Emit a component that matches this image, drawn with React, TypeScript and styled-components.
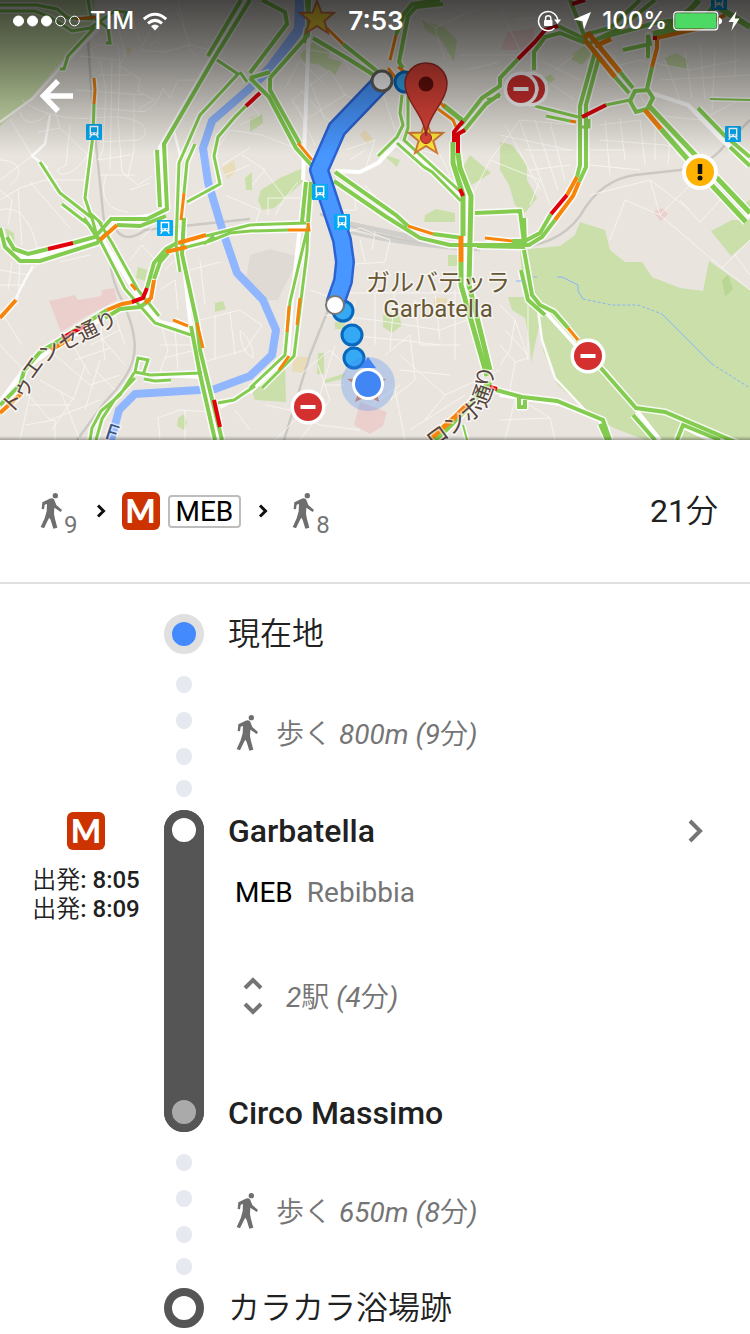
import React from "react";
import styled, { createGlobalStyle } from "styled-components";

const Global = createGlobalStyle`
  *, *::before, *::after { box-sizing: border-box; }
  body { margin: 0; background: #fff; }
  button { border: 0; padding: 0; background: none; color: inherit; font: inherit; cursor: pointer; }
  a { color: inherit; text-decoration: none; }
`;

const Page = styled.main`
  font-family: Roboto, "Noto Sans CJK JP", sans-serif;
  color: #212121;
  background: #fff;
`;

/* ---------- map header ---------- */

const MapHeader = styled.header`
  position: relative;
  min-height: 440px;
  overflow: hidden;
  color: #fff;
`;

const MapCanvas = styled.svg`
  position: absolute;
  inset: 0;
  width: 100%;
  height: 100%;
`;

const HeaderContent = styled.div`
  position: relative;
`;

const StatusBar = styled.div`
  display: grid;
  grid-template-columns: 1fr auto 1fr;
  align-items: center;
  height: 42px;
  padding: 0 10px 0 12px;
  font-family: Inter, sans-serif;
  font-size: 24px;
  font-weight: 500;
  line-height: 42px;
`;

const StatusGroup = styled.div<{ $end?: boolean }>`
  display: flex;
  align-items: center;
  justify-content: ${(p) => (p.$end ? "flex-end" : "flex-start")};
  gap: ${(p) => (p.$end ? "6px" : "8px")};
`;

const StatusIcons = styled.span`
  display: flex;
  align-items: center;
  gap: 12px;
  padding-right: 4px;
`;

const Clock = styled.time`
  font-size: 26px;
  font-weight: 600;
`;

const BackButton = styled.button`
  display: flex;
  margin: 34px 0 0 36px;
`;

/* ---------- route summary ---------- */

const Summary = styled.section`
  display: flex;
  align-items: center;
  justify-content: space-between;
  height: 144px;
  padding: 0 32px;
  border-bottom: 2px solid #e0e0e0;
`;

const Steps = styled.div`
  display: flex;
  align-items: center;
`;

const WalkStep = styled.span`
  display: flex;
  align-items: flex-start;
  height: 38px;
  gap: 1px;
  padding: 0 2px 0 8px;
`;

const WalkMinutes = styled.span`
  padding-top: 21px;
  font-size: 24px;
  line-height: 24px;
  color: #757575;
`;

const StepArrow = styled.svg`
  width: 10px;
  height: 16px;
  margin: 0 16px;
`;

const MetroLogo = styled.span`
  display: flex;
  align-items: center;
  justify-content: center;
  width: 38px;
  height: 38px;
  border-radius: 6px;
  background: #cc3300;
  color: #fff;
  font-family: Lato, sans-serif;
  font-size: 32px;
  font-weight: 900;
  line-height: 36px;
`;

const LineBadge = styled.span`
  margin: 0 1px 0 8px;
  padding: 0 6px;
  border: 2px solid #bdbdbd;
  border-radius: 4px;
  color: #000;
  font-size: 28px;
  line-height: 29px;
`;

const Duration = styled.span`
  font-size: 32px;
  line-height: 40px;
`;

const Light = styled.span`
  font-family: "Noto Sans CJK JP", sans-serif;
  font-style: normal;
  font-weight: 350;
  line-height: 1;
`;

/* ---------- itinerary ---------- */

const Itinerary = styled.ol`
  margin: 0;
  padding: 30px 0 6px;
  list-style: none;
`;

const Row = styled.li<{ $height: number }>`
  display: grid;
  grid-template-columns: 164px 40px 1fr;
  min-height: ${(p) => p.$height}px;
`;

const TimeColumn = styled.div`
  display: flex;
  flex-direction: column;
  align-items: center;
  padding: 2px 24px 0 32px;
`;

const Times = styled.div`
  margin-top: 16px;
  font-size: 24px;
  font-weight: 500;
  line-height: 29px;
  white-space: nowrap;
`;

const TimeLine = styled.div`
  height: 29px;
`;

const Marker = styled.div<{ $ring: string; $fill: string }>`
  width: 40px;
  height: 40px;
  border: 8px solid ${(p) => p.$ring};
  border-radius: 50%;
  background: ${(p) => p.$fill};
`;

const Dots = styled.div`
  display: flex;
  flex-direction: column;
  align-items: center;
  gap: 19px;
  padding-top: 22px;
`;

const Dot = styled.span`
  width: 16px;
  height: 17px;
  border-radius: 8px;
  background: #e6e9ef;

  &:last-child { margin-top: -4px; }
`;

const Track = styled.div`
  display: flex;
  flex-direction: column;
  justify-content: space-between;
  border-radius: 20px;
  background: #555;
`;

const Content = styled.div`
  display: flex;
  flex-direction: column;
  padding-left: 24px;
`;

const Place = styled.h2<{ $station?: boolean; $last?: boolean }>`
  margin: ${(p) => (p.$last ? "auto 0 0" : "0")};
  font-size: 32px;
  font-weight: ${(p) => (p.$station ? 500 : 350)};
  line-height: ${(p) => (p.$last ? "38px" : p.$station ? "42px" : "40px")};
`;

const StationLink = styled.a`
  display: flex;
  align-items: center;
  justify-content: space-between;
  padding-right: 46px;
`;

const Detail = styled.div<{ $indent: number }>`
  display: flex;
  align-items: center;
  flex: 1;
  padding-left: ${(p) => p.$indent}px;
  font-size: 28px;
  line-height: 40px;
  color: #757575;
`;

const DetailText = styled.span<{ $gap: number }>`
  padding-top: 5px;
  margin-left: ${(p) => p.$gap}px;
  font-style: italic;
`;

const LineName = styled.div`
  display: flex;
  gap: 14px;
  margin-top: 21px;
  padding-left: 7px;
  font-size: 28px;
  line-height: 40px;
  color: #757575;
`;

const LineCode = styled.span`
  color: #000;
`;

const StopsButton = styled.button`
  display: flex;
  align-items: center;
  align-self: flex-start;
  margin-top: 60px;
  padding-left: 15px;
  color: #757575;
  font-size: 28px;
  line-height: 40px;
`;

/* ---------- icons ---------- */

const Walker = () => (
  <svg width="23" height="37" viewBox="120 66 69 111" fill="#6e6e6e" aria-hidden="true">
    <circle cx="166" cy="77" r="8" />
    <path d="M149 86Q157 83 162 88Q166 97 169 105L186 120L182 126L163 113L162 132L165 147L172 173L160 176L152 150L148 143L144 150L132 175L122 171L134 145L140 124L141 102L134 104L132 118L125 117L127 97Z" />
  </svg>
);

const NextArrow = () => (
  <StepArrow viewBox="0 0 10 16" fill="none" stroke="#111" strokeWidth="3" aria-hidden="true">
    <path d="M2 2.500L7.500 8L2 13.500" />
  </StepArrow>
);

const Signal = () => (
  <svg width="70" height="14" viewBox="0 0 70 14" fill="#fff" stroke="#fff" aria-hidden="true">
    {[6.5, 20.5, 34.5].map((x) => <circle key={x} cx={x} cy="7" r="5" />)}
    {[48.5, 62.5].map((x) => <circle key={x} cx={x} cy="7" r="4.8" fill="none" />)}
  </svg>
);

const Wifi = () => (
  <svg width="26" height="19" viewBox="0 0 26 19" fill="none" stroke="#fff" strokeWidth="3" aria-hidden="true">
    <path d="M1.8 7.2Q13 -2.6 24.2 7.2" />
    <path d="M6 11.4Q13 5.4 20 11.4" />
    <path d="M9 14.2Q13 11 17 14.2L13 18.5Z" fill="#fff" stroke="none" />
  </svg>
);

const RotationLock = () => (
  <svg width="24" height="22" viewBox="0 0 24 22" fill="none" stroke="#fff" strokeWidth="1.5" aria-hidden="true">
    <path d="M20.7 10A9.6 9.6 0 1 0 17.5 18.3" />
    <path d="M17 9.5H24L20.6 14Z" fill="#fff" stroke="none" />
    <rect x="7" y="10" width="8.5" height="6" rx=".8" fill="#fff" stroke="none" />
    <path d="M8.6 10V8Q8.6 5.7 11.2 5.7Q13.8 5.7 13.8 8V10" />
  </svg>
);

const LocationArrow = () => (
  <svg width="19" height="18" viewBox="0 0 19 18" fill="#fff" aria-hidden="true">
    <path d="M18 0L11 17.5L9.5 9.2L.5 7.5Z" />
  </svg>
);

const Battery = () => (
  <svg width="49" height="20" viewBox="0 0 49 20" aria-hidden="true">
    <rect x=".8" y=".8" width="44" height="18" rx="3" fill="none" stroke="#fff" strokeWidth="1.2" />
    <rect x="2.2" y="2.2" width="41.2" height="15.2" rx="1.5" fill="#4cd964" />
    <path d="M46 6.5Q49 7.5 49 10Q49 12.500 46 13.500Z" fill="#fff" />
  </svg>
);

const Bolt = () => (
  <svg width="12" height="20" viewBox="0 0 12 20" fill="#fff" aria-hidden="true">
    <path d="M8.500 0L.5 11H5.500L3.300 20L11.500 7.500H6.800Z" />
  </svg>
);

/* ---------- map drawing ---------- */

const GREEN = "#84cc50";
const ORANGE = "#f7850b";
const RED = "#e3000b";

type Road = [color: string, width: number, d: string];

const roads: Road[] = [
  [GREEN, 3, "M0 5H37L57 9L68 18L93 19M0 11H35L50 17L72 31L90 28L115 11L126 12L122 28M88 0L91 16L108 28L110 43H106M95 27L68 56L64 69H60"],
  [GREEN, 3, "M94 104L93 135L85 198L90 213L102 224M40 162L60 193L92 218L98 240M62 204L88 224L97 238"],
  [GREEN, 4, "M241 0L208 56M250 0L213 60L164 144L167 209L147 219H110M157 150L160 207"],
  [GREEN, 3, "M217 60L238 74L200 115L179 163L176 245L180 272M240 72L247 82M195 144L187 162L184 193"],
  [GREEN, 3, "M246 106L235 117L218 137L214 156L220 184L187 202"],
  [GREEN, 4, "M262 0L285 12L287 24L250 73M309 0L308 35L270 78M250 78L269 97L296 148L304 157L313 167M250 78L270 72M270 78V90L300 144"],
  [GREEN, 4, "M343 44L377 71M313 38L350 60L380 79M307 28L304 43M307 0L308 15"],
  [GREEN, 4, "M440 0L412 4L404 14L396 35M443 4L416 7L408 16L399 62L403 68"],
  [GREEN, 3, "M402 95L400 113L403 125L397 137L378 156M408 96L408 128L404 140L463 194M397 143L424 167L432 172L461 201"],
  [GREEN, 5, "M443 105L463 121M453 142V163L463 195V236M461 262V285L487 376M458 153L460 168L471 196L469 285L490 370"],
  [GREEN, 4, "M461 125L482 98L500 86V78L518 59M463 132L486 104L500 94"],
  [GREEN, 4, "M306 182L302 222M311 182L308 222M335 172L396 215L408 226M334 181L385 216L420 238L450 245H529L542 237L555 220"],
  [GREEN, 3, "M308 226L290 302L285 355L250 388M308 223L307 252L294 356L262 388"],
  [GREEN, 3, "M250 225L306 223M250 231L288 230M206 236L250 225M187 247L210 241L230 233L250 231M204 244L214 236"],
  [GREEN, 4, "M433 234L463 238M477 246L525 247M512 241L525 241L540 233L551 214M475 213L520 211L524 243"],
  [GREEN, 4, "M534 70V52L545 37L560 33L585 43M558 26L587 40M595 52L580 106V165L577 177M599 57L586 105V167L579 182"],
  [GREEN, 3, "M606 105L630 100M535 106L578 117M546 116L570 121M580 127H589V119"],
  [GREEN, 4, "M570 0L584 35L610 28L640 0M590 43L620 28L655 0M597 39L655 23L690 18"],
  [GREEN, 6, "M653 34L700 25L715 5L750 27M665 29L690 10L699 0"],
  [GREEN, 4, "M623 50L650 44L648 35V58M652 67L647 89M620 72L633 88M615 77L629 93"],
  [GREEN, 5, "M649 106L750 213M661 129L690 162L746 222"],
  [GREEN, 4, "M698 108L724 135L750 157M730 147L750 166"],
  [GREEN, 4, "M635 91L648 90L653 98L647 109L636 112L630 101Z"],
  [GREEN, 4, "M0 228L5 247L20 261H40L97 243L108 232M7 237L14 249L28 254L48 249M73 243L95 237L112 218M117 225L140 226L166 216"],
  [GREEN, 3, "M100 240L125 289L155 323L191 335M98 220L112 243L138 290L159 316M84 218L100 240"],
  [GREEN, 4, "M0 405L20 385L24 371L40 352L60 340L75 330L107 310M105 318L120 309L140 307L150 300M147 288L154 263L166 249L177 243M154 279L160 262L168 253"],
  [GREEN, 4, "M184 218L182 254L197 323L200 350L222 440M191 326L200 374L215 440"],
  [GREEN, 3, "M202 373L150 375L135 372L138 358L148 360L143 375M134 373L120 395L101 411L92 428L90 440M135 378L115 399L102 419L96 440M144 379L155 381L171 380M218 403L234 400L255 386"],
  [GREEN, 4, "M524 218L525 245M524 250L532 295L540 305L554 312L568 328M521 270L528 300L545 315M600 367L636 408L665 412L740 444M633 415L655 440M677 440L683 425L720 440"],
  [GREEN, 4, "M496 390L522 397L557 401L603 420L610 440M600 424L607 440M519 397V407H525V400"],
  [GREEN, 6, "M490 382L465 410L435 440"],
  [GREEN, 2, "M463 425L467 440M710 99L750 100M487 99L500 97"],
  [ORANGE, 3, "M94 78L95 90L94 104M184 193L181 220M327 28L343 44M298 143L312 160M396 35L390 60M388 68L395 77M398 67L405 72M437 100L445 107M438 109L453 120L456 127M308 223L309 230H288M408 226L433 234M485 238L512 241"],
  [ORANGE, 5, "M461 236V262M585 40L615 77M584 38L589 34L620 72M595 46L611 39M645 110L661 129"],
  [ORANGE, 4, "M657 40L657 48L652 67M657 38L700 28L725 15M577 177L567 195M579 182L573 196L555 220M0 318L16 300M100 240L117 225M107 310L122 304L133 302M145 303L151 298L154 280M166 252L170 251L187 247M178 243L206 235M51 350L71 338M0 413L22 393"],
  [ORANGE, 3, "M131 284L136 290M173 320L188 326M197 323L203 348M289 306L287 332M300 298L297 325M289 356L279 370M568 328L578 340M570 121L576 122M76 19L96 17"],
  [ORANGE, 5, "M468 404L454 418L430 439"],
  [RED, 4, "M518 59L535 42L545 30L558 26M582 117L606 105M567 195L551 214M48 249L73 243M132 302L143 298L147 288M214 400L220 427M463 121L454 132V142M465 130L458 134V153M490 387L497 389M460 189L463 196M246 106L260 93M572 4L585 0M653 38H657M62 338L85 326"],
];

const whiteRoads =
  "M245 0L210 60L160 147L163 212L140 222M309 28L303 180M305 180L292 300L288 356L250 392M455 150L457 170L466 200V285L489 372M590 60L583 110V165L575 184L550 220L530 243L500 241M648 92L688 105L725 143L750 163M618 74L631 90M655 112L750 217M605 370L660 440M540 306L580 350M3 235L17 256L35 257L100 240L118 220L162 214M100 235L140 300L160 322L193 330M180 230L190 320L220 440M157 375L202 377M335 171L360 172L378 163L400 140M400 143L462 200M0 402L22 372L60 343L125 306L147 300L158 260L175 248L250 228L306 226M500 395L560 404L600 420L607 440M683 427L730 449M220 407L255 388";

const secondaryRoads =
  "M538 310L542 340L555 378L585 410M15 300L25 280L33 266M48 168L32 156L45 144L50 115M174 131L180 155M0 122L33 98L63 65L100 28";

const minorRoads =
  "M10 119L32 156L0 180M20 112C25 130 45 120 47 112M22 100C40 115 70 120 93 118M38 132L60 128L93 160M60 128L55 112M0 160C20 160 25 175 10 185M0 200L20 188L45 180L85 180M0 190L12 200L8 225M18 189L22 245M30 182L50 205L70 228M0 210C20 205 30 220 38 250M70 125L66 165L57 170C60 180 80 172 90 150M93 55L90 50L98 45H118L120 66L140 79L138 91L154 100L140 108C138 115 155 112 163 88L170 98L178 80H196M80 56L118 60M75 90L143 95M98 75H130M95 108L145 112M100 60L106 90L103 150L98 160M112 60L110 170M120 65L118 120L122 172M134 95V150L128 176M93 118C150 112 152 135 138 140L100 142M98 160L130 155M100 175H135M106 175C100 195 105 210 128 212M122 172L138 185L152 176M130 190L150 183M118 27L125 55L118 68M140 50L160 12L175 5L190 45L165 52ZM150 45L165 35M190 45L210 50M178 0L186 35M128 10L140 40M196 57L186 43";
const minorRoads2 =
  "M222 165L250 148M225 175L250 165M240 125L260 115L245 100M225 195L260 210L255 225M242 155L265 170L252 185M220 145L230 130L262 135M262 135L300 150M292 100L330 70L345 95L305 120ZM300 90L338 130M310 82L325 120M296 105L315 145M325 85L300 60L285 88M350 70L340 55L310 50M360 60L385 90M345 95L370 105M330 120L345 130L340 150M345 150L375 140L365 170M350 160L365 150M262 168L285 198L275 215M268 215L268 198H300M285 198L298 182M340 210H356L355 200M335 190L345 182L375 195L380 215M345 182L370 205M365 185L385 210M380 85L395 130M420 150L440 155L450 175L438 180L425 160M415 12L435 28L445 60M435 28L455 18L475 10M460 55H520M465 70L500 62M500 10L520 50M515 20L555 15M470 200L490 160L540 180L530 205M490 160L520 120L575 125M500 135L570 150M505 125L540 190M520 122L550 205M535 120L558 190M550 122L565 180M525 150H575M530 170L570 165M540 60L580 80M545 80L575 100M555 70L575 55";
const minorRoads3 =
  "M600 70L640 60L690 70L740 60M610 50L650 110M660 80L750 75M665 60L680 100M685 50L692 98M700 45L705 100M715 50L712 110M735 30L735 75M600 125L640 120M655 115L700 120L740 100M600 140L665 145L690 150M605 120L610 175M620 118L625 160M640 120L645 165M655 120V160M670 140L668 165M590 150H625M590 165L640 170M590 195L650 180L690 210M610 240L625 200L660 215L695 180M650 180L660 215M660 215L722 268L750 240M680 200L700 222M725 195L700 222M722 268L750 290M735 255L750 275M655 0L668 15L695 10M340 235L360 228L390 240L385 262L340 265M355 265L352 280M360 240L365 262M375 232L372 250M348 293H460M310 290L330 297M355 300L350 345M375 293V345M395 285L390 350M415 300L420 345M435 295L440 340M455 290L455 360M325 315L375 320L440 330L480 315M345 335L400 340L440 345M385 355L410 335L415 380L390 400M400 355L445 395L425 420M445 395L500 370M400 370L450 375M420 345L460 345M395 390L405 440M372 405L400 385M300 375L330 350L345 365M318 365L330 400L300 440M335 345L320 395M325 385H345M275 440L300 415M265 405L290 410L320 425L360 430M410 430L465 395";
const minorRoads4 =
  "M500 305L515 320L510 350L500 365M515 320L528 358L515 362L500 345M528 300L528 360M505 330L528 355M515 362L510 390M500 420L550 418L555 440M515 400L505 440M530 405L550 418M0 270L28 275L40 262M0 285H25M12 262L8 290M20 262L18 300M0 310L22 345M0 345L22 368M20 385L50 420L100 400M30 395L20 440M40 380L75 400M55 355L90 385L120 375M60 390L80 440M70 340L90 375M85 365L75 395L52 430M90 325L125 365M100 320L105 360M115 315L125 345M75 360L110 348M90 345L120 330M100 360L85 410M115 390L95 370M30 405H70M25 425L55 420V440M160 320L168 350L160 372M175 330L178 370M160 345H195M165 358L195 350M200 320L240 310L262 325L245 350L203 362M215 315V360M230 312L235 355M160 290L175 280L178 310M165 270L175 260M130 260L142 245L160 265M140 240L155 225M190 270L220 262M200 260L205 305M60 262L90 255M158 418L180 410L210 412M160 440L158 418M185 410V440M235 410L250 430M240 330Q255 345 253 358Q240 350 240 330";

const parks = [
  "M0 0H95L92 31L60 63L30 99L0 126Z",
  "M500 142L512 145L527 165V180L537 198L525 213L515 205L509 185L500 170Z",
  "M580 222L605 230L610 250L625 262H642L652 277L680 288L703 291L709 261L750 290V440H645L614 428L588 412L558 385L543 350L540 322L531 363L530 345L525 318L512 310L508 297H524L520 250L560 246L575 235Z",
  "M711 231L732 220H750V240L731 256Z",
  "M470 155L491 173L467 188L460 172Z", "M425 215L436 209L455 213V222H424Z",
  "M261 190L280 178L305 167V180L274 208L262 210L258 200Z", "M250 118L262 114L263 123L250 132Z",
  "M300 55L313 42L322 48L333 45L328 58L342 62L335 75L318 64L305 63Z",
  "M422 20L445 28L457 40L454 62L440 38L425 30Z",
  "M250 385L285 363L286 402L255 400Z", "M383 315L398 312L402 325L392 333L383 327Z",
  "M324 380L346 373L342 379L325 383Z", "M335 322H345V329H335Z", "M448 255H461V266H448Z",
  "M572 55L584 46L592 53L582 65L572 60Z", "M665 58L676 53L688 60L686 69L667 66Z", "M545 78L550 74L555 79L548 85Z",
  "M138 267L147 270L145 281L136 278Z", "M215 303L223 301L226 309L215 312Z", "M178 418L184 414L187 423L184 430L177 426Z",
  "M5 228L14 233L15 245L7 238Z", "M735 210L750 200V216Z", "M245 178L252 172V190H246Z", "M381 153L400 160L397 167Z",
  "M318 353H324V374H317Z",
];

const Train = ({ x, y }: { x: number; y: number }) => (
  <g transform={`translate(${x - 8} ${y - 8})`}>
    <rect width="16" height="16" rx="1" fill="#03a9f4" />
    <path d="M4.300 2.500H11.700V10.500H4.300Z" fill="none" stroke="#fff" strokeWidth="1.400" />
    <path d="M4 8.300H12V11H4ZM4.500 11L3 13.800H4.500L6 11ZM11.500 11L13 13.800H11.500L10 11Z" fill="#fff" />
    <path d="M5.500 9.300H7M9 9.300H10.500" stroke="#03a9f4" />
  </g>
);

const NoEntry = ({ x, y }: { x: number; y: number }) => (
  <g transform={`translate(${x} ${y})`}>
    <circle r="17.500" fill="#fff" />
    <circle r="14" fill="#d3302f" />
    <path d="M-7.500 0H7.500" stroke="#fff" strokeWidth="4" />
  </g>
);

const STAR = "M0 -17L4.500 -5.500L17 -5L7.300 3L11 15L0 8L-11 15L-7.300 3L-17 -5L-4.500 -5.500Z";
const ROUTE = "M382 82L337 129L319 170L342 240L345 262L343 281L335 304";

const RouteMap = () => (
  <MapCanvas viewBox="0 0 750 440" preserveAspectRatio="xMidYMid slice" role="img" aria-label="経路の地図">
    <defs>
      <linearGradient id="shade" x1="0" y1="0" x2="0" y2="1">
        <stop offset="0" stopColor="#000" stopOpacity=".7" />
        <stop offset=".3" stopColor="#000" stopOpacity=".51" />
        <stop offset=".7" stopColor="#000" stopOpacity=".2" />
        <stop offset="1" stopColor="#000" stopOpacity="0" />
      </linearGradient>
      <linearGradient id="edge" x1="0" y1="0" x2="0" y2="1">
        <stop offset="0" stopColor="#000" stopOpacity="0" />
        <stop offset="1" stopColor="#000" stopOpacity=".3" />
      </linearGradient>
      <path id="ostiense" d="M10 415Q27 400 32 384Q40 364 62 352L130 318" />
      <path id="colombo" d="M433 449L474 419Q500 400 490 352" />
    </defs>
    <rect width="750" height="440" fill="#e9e5de" />
    <path d="M250 255L270 249L300 257L285 285L278 300L265 300L245 285Z" fill="#dfdad4" />
    {parks.map((d) => <path key={d} d={d} fill="#cbdfaa" />)}
    <path d="M722 280L728 275L733 289L725 297Z" fill="#b9d695" />
    <path d="M49 301L75 295L78 300L101 296L102 290L114 288L117 300L85 317L61 332Z M360 402L387 412L383 426L370 434L354 425Z M500 50L508 32L535 28L530 55L520 50Z M653 212L662 208L668 214L661 221Z" fill="#ebcfcd" />
    <path d="M222 168L234 160L236 170L228 180Z M293 357H308L306 374L292 371Z M360 135L365 130L373 139L367 144Z M434 298H447V306H434Z M126 47L133 49L128 56Z" fill="#e9dcb9" />
    <path d="M88 40L93 115L104 222M112 255Q108 268 118 292Q140 335 133 360Q128 378 105 402L77 440M115 228Q125 245 145 230L250 219M330 305L310 355L284 440M320 214Q400 250 500 248Q555 250 580 216Q600 180 635 175L680 170Q710 165 725 145L750 120" fill="none" stroke="#ccc9c5" strokeWidth="2.500" />
    <path d="M330 218Q380 232 450 248M345 222L460 246M335 228Q390 245 480 250" fill="none" stroke="#d1cfcb" strokeWidth="3" />
    <path d="M299 0L298 29L270 67L250 88L212 121L203 148L208 182L223 232L237 273L263 300L276 330L272 355L250 376L215 389L135 394L119 410L111 440" fill="none" stroke="#90b6ff" strokeWidth="8" strokeLinejoin="round" />
    <path d="M303 0L301 28L272 67L254 84" fill="none" stroke="#90b6ff" strokeWidth="9" />
    <path d={minorRoads + minorRoads2 + minorRoads3 + minorRoads4} fill="none" stroke="#faf8f5" strokeOpacity=".8" strokeLinejoin="round" />
    <path d={secondaryRoads} fill="none" stroke="#fbfaf8" strokeWidth="2.500" strokeLinejoin="round" />
    <path d={whiteRoads} fill="none" stroke="#fff" strokeWidth="4" strokeLinejoin="round" />
    {roads.map(([, width, d]) => <path key={d} d={d} fill="none" stroke="#fff" strokeOpacity=".85" strokeWidth={width + 3} strokeLinejoin="round" />)}
    {roads.map(([color, width, d]) => <path key={d} d={d} fill="none" stroke={color} strokeWidth={width} />)}
    <path d="M516 281H523M533 277H537M557 277H562L578 285V291L583 299M662 314L712 364" fill="none" stroke="#88b4f8" />
    <path d="M583 299L612 305H638L662 314M712 364L750 388" fill="none" stroke="#88b4f8" strokeDasharray="3 2" />

    <g fontFamily='Roboto, "Noto Sans CJK JP", sans-serif' fill="#594440" stroke="#fff" strokeWidth="3" strokeOpacity=".6" paintOrder="stroke">
      <text fontSize="21"><textPath href="#ostiense">トゥエンセ通り</textPath></text>
      <text fontSize="22"><textPath href="#colombo">ロンボ通り</textPath></text>
      <text fontSize="22" fill="#3d557f" transform="translate(104 438) rotate(18)">F</text>
      <text x="438" y="291" fontSize="24" textAnchor="middle" fill="#685733">ガルバテッラ</text>
      <text x="438" y="317" fontSize="24" textAnchor="middle" fill="#685733">Garbatella</text>
    </g>

    <g transform="translate(317 18)"><path d={STAR} fill="#f5d536" stroke="#d6784b" strokeWidth="2" /></g>
    <g fill="#36a9f4" stroke="#0868bd" strokeWidth="3">
      <circle cx="405" cy="82" r="10" />
      <circle cx="343" cy="311" r="10" />
      <circle cx="352" cy="335" r="10" />
      <circle cx="354" cy="358" r="10" />
    </g>
    <path d={ROUTE} fill="none" stroke="#2c63d4" strokeWidth="20" strokeLinejoin="round" />
    <path d={ROUTE} fill="none" stroke="#4896ff" strokeWidth="15" strokeLinejoin="round" />
    <circle cx="382" cy="81" r="10" fill="#fff" stroke="#66635f" strokeWidth="3" />
    <circle cx="335" cy="305" r="9" fill="#fff" stroke="#777" strokeWidth="2" />

    <Train x={94} y={132} />
    <Train x={165} y={228} />
    <Train x={320} y={192} />
    <Train x={342} y={222} />
    <Train x={733} y={134} />
    <Train x={719} y={2} />

    <circle cx="368" cy="384" r="27" fill="#4285f4" fillOpacity=".28" />
    <g transform="translate(368 384)"><path d="M0 -18L5 -6L18 -5L8 4L11 18L0 12L-13 18L-8 4L-21 -5L-5 -6Z" fill="#b48783" /></g>
    <path d="M368 357L376 368H360Z" fill="#4285f4" />
    <circle cx="368" cy="384" r="14.500" fill="#4285f4" stroke="#fff" strokeWidth="3" />

    <NoEntry x={531} y={89} />
    <NoEntry x={521} y={89} />
    <NoEntry x={588} y={356} />
    <NoEntry x={308} y={407} />
    <circle cx="700" cy="172" r="16" fill="#ffb300" stroke="#fff" strokeWidth="4" />
    <path d="M700 164V174" stroke="#111" strokeWidth="4.500" />
    <circle cx="700" cy="178" r="2.500" fill="#111" />

    <g transform="translate(426 138)"><path d={STAR} fill="#ffe83b" stroke="#d07b38" strokeWidth="2" /></g>
    <circle cx="426" cy="138" r="5.500" fill="#df4438" stroke="#a52b25" />
    <path d="M426 136C425 116 405 101 405 84A21 21 0 0 1 447 84C447 101 427 116 426 136Z" fill="#df4438" stroke="#a02a25" strokeWidth="1.500" />
    <circle cx="426" cy="84" r="7.500" fill="#68100c" />

    <rect width="750" height="155" fill="url(#shade)" />
    <rect y="436" width="750" height="4" fill="url(#edge)" />
  </MapCanvas>
);

/* ---------- rows ---------- */

const StopRow = ({ name, ring, fill }: { name: string; ring: string; fill: string }) => (
  <Row $height={40}>
    <span />
    <Marker $ring={ring} $fill={fill} />
    <Content><Place><Light>{name}</Light></Place></Content>
  </Row>
);

const WalkRow = ({ distance, minutes }: { distance: string; minutes: number }) => (
  <Row $height={156}>
    <span />
    <Dots><Dot /><Dot /><Dot /><Dot /></Dots>
    <Content>
      <Detail $indent={8}>
        <Walker />
        <DetailText $gap={17}>
          <Light>歩く</Light> {distance} ({minutes}<Light>分</Light>)
        </DetailText>
      </Detail>
    </Content>
  </Row>
);

export default function App() {
  return (
    <Page>
      <Global />
      <MapHeader>
        <RouteMap />
        <HeaderContent>
          <StatusBar>
            <StatusGroup><Signal /><span>TIM</span><Wifi /></StatusGroup>
            <Clock>7:53</Clock>
            <StatusGroup $end>
              <StatusIcons><RotationLock /><LocationArrow /></StatusIcons>
              <span>100%</span>
              <Battery />
              <Bolt />
            </StatusGroup>
          </StatusBar>
          <BackButton type="button" aria-label="戻る">
            <svg width="40" height="40" viewBox="0 0 40 40" fill="none" stroke="#fff" strokeWidth="5.500" aria-hidden="true">
              <path d="M37 20H8M22 5L7.500 20L22 35" />
            </svg>
          </BackButton>
        </HeaderContent>
      </MapHeader>

      <Summary aria-label="経路の概要">
        <Steps>
          <WalkStep><Walker /><WalkMinutes>9</WalkMinutes></WalkStep>
          <NextArrow />
          <MetroLogo>M</MetroLogo>
          <LineBadge>MEB</LineBadge>
          <NextArrow />
          <WalkStep><Walker /><WalkMinutes>8</WalkMinutes></WalkStep>
        </Steps>
        <Duration>21<Light>分</Light></Duration>
      </Summary>

      <Itinerary>
        <StopRow name="現在地" ring="#e0e0e0" fill="#448aff" />
        <WalkRow distance="800m" minutes={9} />
        <Row $height={322}>
          <TimeColumn>
            <MetroLogo>M</MetroLogo>
            <Times>
              <TimeLine><Light>出発</Light>: 8:05</TimeLine>
              <TimeLine><Light>出発</Light>: 8:09</TimeLine>
            </Times>
          </TimeColumn>
          <Track>
            <Marker $ring="#555" $fill="#fff" />
            <Marker $ring="#555" $fill="#aaa" />
          </Track>
          <Content>
            <StationLink href="#garbatella">
              <Place $station>Garbatella</Place>
              <svg width="16" height="24" viewBox="0 0 16 24" fill="none" stroke="#757575" strokeWidth="4" aria-hidden="true">
                <path d="M2 2L12 12L2 22" />
              </svg>
            </StationLink>
            <LineName><LineCode>MEB</LineCode><span>Rebibbia</span></LineName>
            <StopsButton type="button">
              <svg width="20" height="38" viewBox="0 0 20 38" fill="none" stroke="#757575" strokeWidth="4" aria-hidden="true">
                <path d="M2 11L10 3L18 11M2 27L10 35L18 27" />
              </svg>
              <DetailText $gap={23}>2<Light>駅</Light> (4<Light>分</Light>)</DetailText>
            </StopsButton>
            <Place $station $last>Circo Massimo</Place>
          </Content>
        </Row>
        <WalkRow distance="650m" minutes={8} />
        <StopRow name="カラカラ浴場跡" ring="#555" fill="#fff" />
      </Itinerary>
    </Page>
  );
}
